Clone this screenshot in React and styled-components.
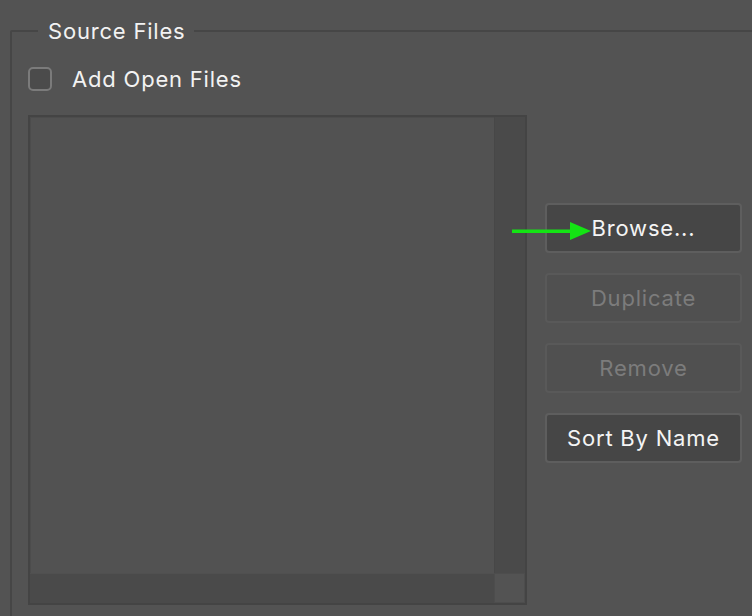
import React from 'react';
import styled, { createGlobalStyle } from 'styled-components';

const GlobalStyle = createGlobalStyle`
  html, body {
    margin: 0;
    padding: 0;
    background: #535353;
    overflow: hidden;
  }
  body {
    font-family: Inter, "Liberation Sans", sans-serif;
    color: #f2f2f2;
  }
`;

const Page = styled.div`
  width: 752px;
  height: 616px;
  padding: 18px 0 0 10px;
  box-sizing: border-box;
  background: #535353;
  overflow: hidden;
`;

const Group = styled.fieldset`
  width: 800px;
  height: 700px;
  margin: 0;
  padding: 0 16px;
  box-sizing: border-box;
  border: 2px solid #464646;
  border-radius: 2px;
`;

const Legend = styled.legend`
  margin-left: 10px;
  padding: 0 8px 0 10px;
  font-size: 22px;
  letter-spacing: 0.8px;
  line-height: 26px;
  color: #f2f2f2;
`;

const CheckRow = styled.label`
  display: flex;
  align-items: center;
  gap: 20px;
  height: 24px;
  margin-top: 23px;
  font-size: 22px;
  letter-spacing: 0.8px;
  color: #f2f2f2;
`;

const Checkbox = styled.span`
  width: 20px;
  height: 20px;
  border: 2px solid #7b7b7b;
  border-radius: 5px;
  background: #4b4b4b;
`;

const Body = styled.div`
  display: flex;
  align-items: flex-start;
  gap: 18px;
  margin-top: 24px;
`;

const List = styled.div`
  width: 499px;
  height: 490px;
  box-sizing: border-box;
  border: 2px solid #444;
  display: grid;
  grid-template-columns: 1fr 31px;
  grid-template-rows: 1fr 30px;
  background: #525252;
`;

const ListArea = styled.div`
  border-top: 1px solid #4c4c4c;
  border-left: 1px solid #4c4c4c;
`;

const VScroll = styled.div`
  background: #4a4a4a;
  border-left: 1px solid #474747;
`;

const HScroll = styled.div`
  background: #4a4a4a;
  border-top: 1px solid #505050;
`;

const Corner = styled.div`
  background: #535353;
  border: 1px solid #4d4d4d;
`;

const Buttons = styled.div`
  display: flex;
  flex-direction: column;
  gap: 20px;
  margin-top: 88px;
  position: relative;
`;

const Button = styled.button`
  width: 197px;
  height: 50px;
  box-sizing: border-box;
  border-radius: 4px;
  font-family: Inter, "Liberation Sans", sans-serif;
  font-size: 22px;
  letter-spacing: 0.8px;
  padding: 0;
  border: 2px solid ${({ disabled }) => (disabled ? '#595959' : '#5e5e5e')};
  background: ${({ disabled }) => (disabled ? '#505050' : '#464646')};
  color: ${({ disabled }) => (disabled ? '#7c7c7c' : '#f4f4f4')};
`;

const Arrow = styled.svg`
  position: absolute;
  left: -34px;
  top: 16px;
  width: 80px;
  height: 24px;
`;

const App = () => (
  <>
    <GlobalStyle />
    <Page>
      <Group>
        <Legend>Source Files</Legend>
        <CheckRow>
          <Checkbox />
          Add Open Files
        </CheckRow>
        <Body>
          <List>
            <ListArea />
            <VScroll />
            <HScroll />
            <Corner />
          </List>
          <Buttons>
            <Button>Browse...</Button>
            <Button disabled>Duplicate</Button>
            <Button disabled>Remove</Button>
            <Button>Sort By Name</Button>
            <Arrow viewBox="0 0 80 24">
              <rect x="1" y="10.5" width="62" height="3.5" fill="#14e414" />
              <polygon points="59,3 80,12 59,21" fill="#14e414" />
            </Arrow>
          </Buttons>
        </Body>
      </Group>
    </Page>
  </>
);

export default App;
